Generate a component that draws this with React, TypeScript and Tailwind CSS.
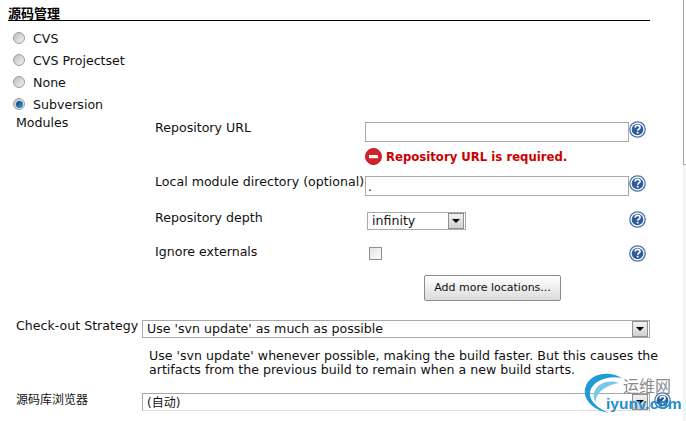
const font = "font-['DejaVu_Sans','Noto_Sans_CJK_SC',sans-serif]"

function Radio({ label, checked }: { label: string; checked?: boolean }) {
  return (
    <div className="flex h-[22px] items-center pl-[13px]">
      <span className="-mt-[2px] flex h-[12px] w-[12px] items-center justify-center rounded-full border border-[#9c9c9c] bg-gradient-to-br from-[#bdbdbd] to-[#f4f4f4]">
        {checked && <span className="h-[7px] w-[7px] rounded-full bg-gradient-to-br from-[#0b3f73] to-[#3f9ddb]" />}
      </span>
      <span className="ml-[8px]">{label}</span>
    </div>
  )
}

function Help() {
  return (
    <svg width="17" height="17" viewBox="0 0 17 17" className="shrink-0">
      <circle cx="8.5" cy="8.5" r="7.7" fill="#fff" stroke="#4a74ad" strokeWidth="1.3" />
      <circle cx="8.5" cy="8.5" r="5.8" fill="#2f5c9a" />
      <path d="M6.1 6.6c.1-1.5 1.2-2.2 2.5-2.2 1.4 0 2.4.8 2.4 2 0 1.7-2.3 1.8-2.3 3.4" fill="none" stroke="#fff" strokeWidth="1.6" />
      <rect x="7.8" y="10.8" width="1.7" height="1.7" fill="#fff" />
    </svg>
  )
}

function SelectBox({ value, className, textClass }: { value: string; className: string; textClass: string }) {
  return (
    <div className={`flex items-center border border-[#a9a9a9] bg-white ${className}`}>
      <span className={`flex-1 pl-[4px] leading-none ${textClass}`}>{value}</span>
      <span className="mr-px flex h-[16px] w-[16px] items-center justify-center border border-[#8f8f8f] bg-gradient-to-b from-[#f2f2f2] to-[#d0d0d0]">
        <span className="h-0 w-0 border-x-[4px] border-t-[4px] border-x-transparent border-t-black" />
      </span>
    </div>
  )
}

function Row({ label, h, children }: { label: string; h: string; children: React.ReactNode }) {
  return (
    <div className={`flex ${h}`}>
      <div className="w-[210px] whitespace-nowrap">{label}</div>
      {children}
    </div>
  )
}

export default function App() {
  return (
    <div className={`${font} relative h-[421px] w-[686px] overflow-hidden bg-white text-[12.6px] leading-[14px] text-[#111]`}>
      <div className="pt-[7px] pl-[8px] pr-[36px]">
        <div className="h-[14px] border-b border-black text-[13px] font-bold leading-[13px] text-black">源码管理</div>
      </div>

      <div className="pt-[7px]">
        <Radio label="CVS" />
        <Radio label="CVS Projectset" />
        <Radio label="None" />
        <Radio label="Subversion" checked />
      </div>

      {/* Subversion modules */}
      <div className="flex pl-[16px]">
        <div className="w-[139px]">Modules</div>
        <div className="pt-[5px]">
          <Row label="Repository URL" h="h-[27px]">
            <div className="flex items-start">
              <div className="mt-[1px] h-[20px] w-[264px] border border-[#a9a9a9]" />
              <div><Help /></div>
            </div>
          </Row>
          <div className="flex h-[27px] pl-[210px]">
            <div className="flex h-[17px] items-center text-[11.7px] font-bold text-[#cc0000]">
              <svg width="17" height="17" viewBox="0 0 17 17" className="shrink-0">
                <circle cx="8.5" cy="8.5" r="8" fill="#d3222a" stroke="#c01a20" />
                <rect x="4" y="7" width="9" height="3.2" fill="#fff" />
              </svg>
              <span className="ml-[4px] whitespace-nowrap">Repository URL is required.</span>
            </div>
          </div>
          <Row label="Local module directory (optional)" h="h-[36px]">
            <div className="flex items-start">
              <div className="mt-[1px] flex h-[20px] w-[264px] items-end border border-[#a9a9a9] pb-[1px] pl-[2px]">.</div>
              <div><Help /></div>
            </div>
          </Row>
          <Row label="Repository depth" h="h-[34px]">
            <div className="flex w-[281px] items-start pl-[2px]">
              <SelectBox value="infinity" className="mt-[1px] h-[18px] w-[99px]" textClass="pt-[1px]" />
              <div className="ml-auto"><Help /></div>
            </div>
          </Row>
          <Row label="Ignore externals" h="h-[30px]">
            <div className="flex w-[281px] items-start pl-[4px]">
              <span className="mt-[2px] h-[13px] w-[13px] border border-[#8f8f8f] bg-gradient-to-br from-[#e2e2e2] to-white" />
              <div className="ml-auto"><Help /></div>
            </div>
          </Row>
          <div className="flex h-[45px] pl-[269px]">
            <button className="h-[26px] w-[137px] rounded-[2px] border border-[#8a8a8a] bg-gradient-to-b from-white to-[#dcdcdc] text-[11px] text-[#111]">Add more locations...</button>
          </div>
        </div>
      </div>

      <div className="flex pl-[16px]">
        <div className="-mt-[1px] w-[126px] whitespace-nowrap">Check-out Strategy</div>
        <div className="w-[508px]">
          <SelectBox value="Use 'svn update' as much as possible" className="h-[18px] w-[508px]" textClass="pt-[1px]" />
          <p className="mt-[11px] w-[520px] pl-[7px] leading-[14px]">
            Use 'svn update' whenever possible, making the build faster. But this causes the artifacts from the previous build to remain when a new build starts.
          </p>
        </div>
      </div>

      <div className="mt-[16px] flex pl-[16px]">
        <div className="w-[126px] whitespace-nowrap text-[12px]">源码库浏览器</div>
        <SelectBox value="(自动)" className="h-[18px] w-[508px] border-b-[#dddddd] text-[12px]" textClass="pt-[2px]" />
      </div>

      {/* help icon next to last select */}
      <div className="absolute left-[654px] top-[392px]"><Help /></div>

      {/* page scrollbar edge */}
      <div className="absolute right-0 top-0 h-full w-[3px] bg-[#f4f4f4]">
        <div className="h-[165px] w-[3px] border-b border-l border-[#a8a8a8] bg-white" />
      </div>

      {/* iyunv watermark */}
      <div className="absolute left-[581px] top-[372px] h-[42px] w-[105px]">
        <svg width="50" height="42" viewBox="0 0 50 42" className="absolute left-0 top-0">
          <path d="M41 6C28-2 7 1 4 17c-2 11 8 21 24 24C16 36 8 29 9 20 11 9 27 3 41 6Z" fill="#1e9ad6" />
          <path d="M38 11C27 7 15 12 13 21c-1 4 0 7 2 9-1-8 9-17 23-19Z" fill="#7cc6ea" />
        </svg>
        <span className="absolute left-[42px] top-[6px] whitespace-nowrap text-[16px] leading-[18px] text-[#8a8a8a]">运维网</span>
        <span className="absolute left-[25px] top-[23px] whitespace-nowrap font-['Liberation_Sans',sans-serif] text-[15.5px] font-bold leading-[18px] text-[#1e8fd0]">iyunv.com</span>
      </div>
    </div>
  )
}
